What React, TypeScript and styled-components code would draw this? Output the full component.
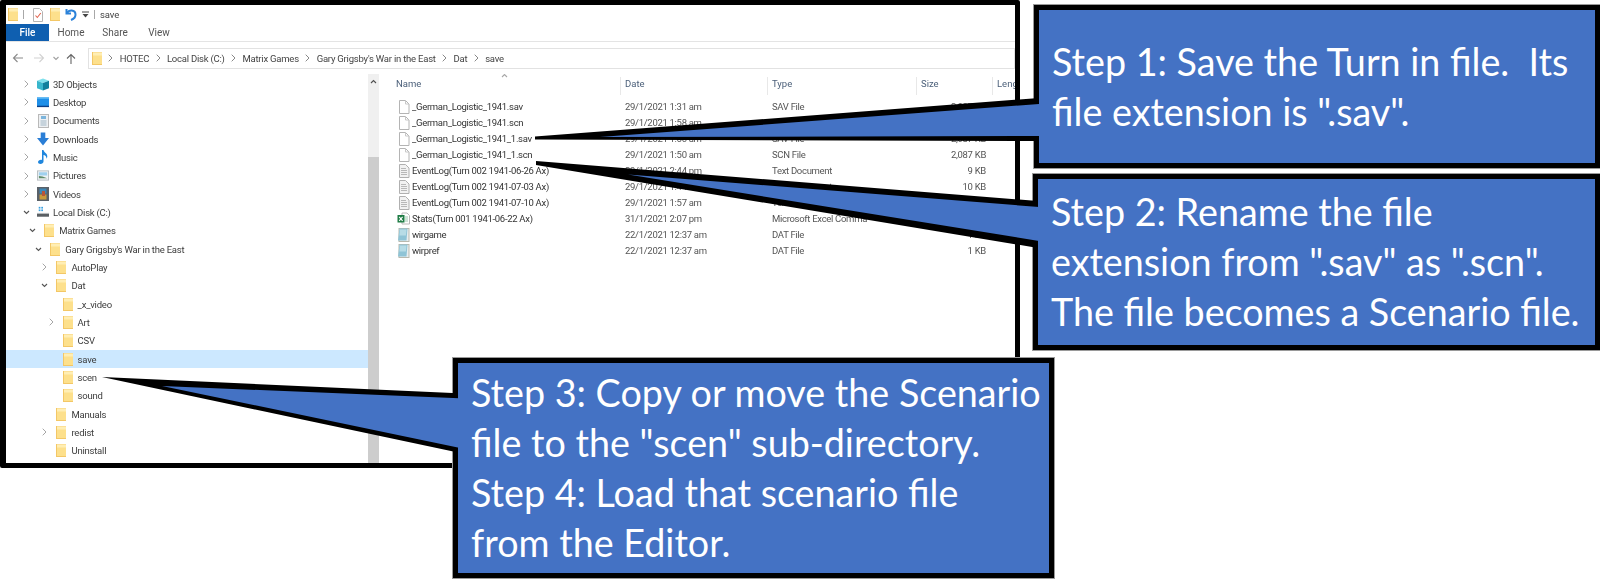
import React from "react";
import styled, { createGlobalStyle } from "styled-components";

const Global = createGlobalStyle`
  html, body { margin: 0; padding: 0; background: #fff; }
  body { font-family: Roboto, "Open Sans", sans-serif; }
`;

const Page = styled.div`
  position: relative;
  width: 1600px;
  height: 579px;
  overflow: hidden;
  background: #fff;
`;

const Frame = styled.div`
  width: 1020px;
  height: 468px;
  box-sizing: border-box;
  border: solid #000;
  border-width: 5px 5px 5px 6px;
  border-radius: 2px;
  overflow: hidden;
  background: #fff;
`;

const Window = styled.div`
  display: flex;
  flex-direction: column;
  height: 100%;
  filter: blur(0.45px);
  font-size: 10px;
  color: #3a3a3a;
`;

const TitleBar = styled.div`
  display: flex;
  align-items: center;
  height: 19px;
  padding-left: 2px;
  flex: none;
`;

const TitleText = styled.span`
  font-size: 9.5px;
  letter-spacing: -0.1px;
  color: #444;
`;

const TitleSep = styled.span`
  width: 1px;
  height: 9px;
  background: #a8a8a8;
  margin: 0 ${(p: { $gap: number }) => p.$gap}px;
`;

const Tabs = styled.div`
  display: flex;
  height: 18px;
  flex: none;
  box-sizing: border-box;
  border-bottom: 1px solid #e4e4e4;
`;

const FileTab = styled.div`
  width: 43px;
  display: flex;
  align-items: center;
  justify-content: center;
  background: #0f5fb0;
  color: #fff;
  font-weight: 500;
  font-size: 10px;
`;

const Tab = styled.div`
  width: 44px;
  display: flex;
  align-items: center;
  justify-content: center;
  color: #555;
  font-size: 10px;
`;

const AddressRow = styled.div`
  display: flex;
  align-items: center;
  height: 32px;
  flex: none;
`;

const NavButton = styled.div<{ $w: number }>`
  display: flex;
  justify-content: center;
  align-items: center;
  width: ${(p) => p.$w}px;
`;

const AddressBox = styled.div`
  display: flex;
  align-items: center;
  gap: 6.4px;
  flex: 1;
  height: 21px;
  box-sizing: border-box;
  border: 1px solid #e2e2e2;
  padding-left: 3px;
  font-size: 9.5px;
  letter-spacing: -0.22px;
  color: #444;
  white-space: nowrap;
`;

const Panes = styled.div`
  display: flex;
  flex: 1;
  min-height: 0;
`;

const Tree = styled.div`
  width: 362px;
  flex: none;
  overflow: hidden;
  padding-top: 1px;
`;

const TreeRow = styled.div<{ $level: number; $selected?: boolean }>`
  display: flex;
  align-items: center;
  height: 18.33px;
  box-sizing: border-box;
  padding-left: ${(p) => 15 + p.$level * 6.15}px;
  background: ${(p) => (p.$selected ? "#cce8ff" : "transparent")};
  font-size: 9.5px;
  letter-spacing: -0.22px;
  color: #3c3c3c;
  white-space: nowrap;
`;

const Chevron = styled.span`
  width: 11px;
  height: 12px;
  display: flex;
  align-items: center;
  justify-content: center;
  flex: none;
`;

const TreeIcon = styled.span`
  width: 12px;
  height: 14px;
  margin: 0 4px 0 5px;
  display: flex;
  align-items: center;
  justify-content: center;
  flex: none;
`;

const Scrollbar = styled.div`
  width: 11px;
  flex: none;
  display: flex;
  flex-direction: column;
  background: #f0f0f0;
`;

const ScrollUp = styled.div`
  height: 14px;
  display: flex;
  align-items: center;
  justify-content: center;
  margin-bottom: 69px;
`;

const ScrollThumb = styled.div`
  flex: 1;
  background: #cdcdcd;
`;

const Files = styled.div`
  flex: 1;
  min-width: 0;
  overflow: hidden;
`;

const HeaderRow = styled.div`
  position: relative;
  display: grid;
  grid-template-columns: 241px 147px 149px 76px 23px;
  height: 24.5px;
  padding-top: 3px;
  box-sizing: border-box;
`;

const HeaderCell = styled.div<{ $first?: boolean }>`
  height: 18px;
  line-height: 14px;
  box-sizing: border-box;
  padding-left: ${(p) => (p.$first ? 17 : 4)}px;
  border-left: ${(p) => (p.$first ? "none" : "1px solid #e8e8e8")};
  color: #4c607a;
  font-size: 9.5px;
  white-space: nowrap;
`;

const SortCaret = styled.span`
  position: absolute;
  left: 122px;
  top: -1px;
  display: flex;
`;

const FileRow = styled.div`
  display: grid;
  grid-template-columns: 241px 147px 149px 76px;
  align-items: center;
  height: 16.05px;
  font-size: 9.5px;
  letter-spacing: -0.3px;
  color: #555;
  white-space: nowrap;
`;

const NameCell = styled.div`
  display: flex;
  align-items: center;
  padding-left: 18px;
  color: #333;
`;

const FileIconBox = styled.span`
  width: 13px;
  height: 14px;
  margin-right: 2px;
  display: flex;
  align-items: center;
  justify-content: center;
  flex: none;
`;

const DataCell = styled.div`
  padding-left: 5px;
`;

const SizeCell = styled.div`
  padding-right: 6px;
  text-align: right;
`;

const Callout = styled.div<{ $l: number; $t: number; $w: number; $h: number }>`
  position: absolute;
  left: ${(p) => p.$l}px;
  top: ${(p) => p.$t}px;
  width: ${(p) => p.$w}px;
  height: ${(p) => p.$h}px;
  box-sizing: border-box;
  display: flex;
  align-items: center;
  background: #4472c4;
  border: 5px solid #000;
  outline: 1px solid #9a9a9a;
  padding-left: 13px;
  color: #fff;
  font-family: Lato, "Open Sans", sans-serif;
  line-height: 50px;
  white-space: pre;
`;

const CalloutText = styled.div`
  font-size: 37.7px;
`;

const Pointers = styled.svg`
  position: absolute;
  left: 0;
  top: 0;
  width: 1600px;
  height: 579px;
  pointer-events: none;
`;

/* ---------- icons ---------- */
const Folder = ({ w = 10, h = 13 }: { w?: number; h?: number }) => (
  <svg width={w} height={h} viewBox="0 0 10 13">
    <rect x="0" y="0" width="10" height="13" fill="#f3c766" />
    <rect x="1" y="0.500" width="9" height="11.500" fill="#fde08c" />
    <rect x="1" y="0.500" width="9" height="3" fill="#ffeeb4" />
  </svg>
);

const BlankFile = () => (
  <svg width="12" height="14" viewBox="0 0 12 14">
    <path d="M1.500.500h6l3.500 3.500v9.500h-9.500z" fill="#fff" stroke="#b4b4b4" />
    <path d="M7.500.500v3.500h3.500" fill="none" stroke="#c8c8c8" />
  </svg>
);

const TextFile = () => (
  <svg width="12" height="14" viewBox="0 0 12 14">
    <path d="M1.500.500h6l3.500 3.500v9.500h-9.500z" fill="#f2f2f2" stroke="#b0b0b0" />
    <path d="M3 4.500h5M3 6.500h6M3 8.500h6M3 10.500h6" stroke="#b8b8b8" strokeWidth="1" />
  </svg>
);

const ExcelFile = () => (
  <svg width="13" height="13" viewBox="0 0 13 13">
    <path d="M5 1h5l2.500 2.500v8.500h-7.500z" fill="#fff" stroke="#b8b8b8" />
    <path d="M8 5h3M8 7h3M8 9h3" stroke="#9cc7ae" />
    <rect x="0.500" y="3" width="7" height="7.500" fill="#1e7c45" />
    <path d="M2.200 4.800l3.400 4M5.600 4.800l-3.400 4" stroke="#fff" strokeWidth="1.100" />
  </svg>
);

const DatFile = () => (
  <svg width="13" height="14" viewBox="0 0 13 14">
    <rect x="2" y="0.500" width="10" height="13" fill="#e8eef0" stroke="#b9b9ae" />
    <path d="M1 12.500l1.500-12h8l-1 12z" fill="#8fc4d6" />
    <path d="M3 1.500h6.500l-.6 6h-6.500z" fill="#b7dce6" />
  </svg>
);

const Cube = () => (
  <svg width="13" height="13" viewBox="0 0 13 13">
    <path d="M0 2.500L6.500 0 13 2.500 6.500 5z" fill="#7fe0ec" />
    <path d="M0 2.500L6.500 5v8L0 10.500z" fill="#38b6cc" />
    <path d="M13 2.500L6.500 5v8l6.500-2.500z" fill="#0f7f9c" />
  </svg>
);

const Desktop = () => (
  <svg width="13" height="11" viewBox="0 0 13 11">
    <rect width="13" height="10" y="0" fill="#1e8fe8" />
    <rect width="13" height="1.500" y="9" fill="#0c3f86" />
    <rect width="13" height="1.500" y="0" fill="#5cb8f5" />
  </svg>
);

const Documents = () => (
  <svg width="11" height="14" viewBox="0 0 11 14">
    <rect x="0.500" y="0.500" width="10" height="13" fill="#eef0f2" stroke="#b9b9b9" />
    <rect x="3" y="2" width="5" height="3" fill="#7cb5dc" />
    <path d="M2.500 7h6M2.500 9h6M2.500 11h6" stroke="#9fb6c6" />
  </svg>
);

const Downloads = () => (
  <svg width="13" height="14" viewBox="0 0 13 14">
    <path d="M4 0h5v6h4l-6.500 8L0 6h4z" fill="#2a7ed6" />
  </svg>
);

const Music = () => (
  <svg width="10" height="14" viewBox="0 0 10 14">
    <path d="M4 0h1.500c.2 2.500 3.800 3 3.800 6.500 0 1-.4 1.800-.8 2.300.2-2.300-1.500-3.600-3-3.800V11.500c0 1.500-1.500 2.500-3 2.500C1 14 0 13.200 0 12c0-1.300 1.500-2.300 3-2.300.4 0 .7 0 1 .2z" fill="#1f86dd" />
  </svg>
);

const Pictures = () => (
  <svg width="13" height="11" viewBox="0 0 13 11">
    <rect x="0.500" y="0.500" width="12" height="10" fill="#eef2f4" stroke="#b6bcc0" />
    <rect x="2" y="2" width="9" height="3.500" fill="#9fd0ee" />
    <path d="M2 8.500V6l4 .5 5 2z" fill="#5f8c6a" />
  </svg>
);

const Videos = () => (
  <svg width="12" height="14" viewBox="0 0 12 14">
    <rect width="12" height="14" fill="#5a6168" />
    <rect x="2.500" y="1.500" width="7" height="5" fill="#3d88b8" />
    <rect x="2.500" y="7.500" width="7" height="5" fill="#c89a3c" />
    <rect x="5" y="4" width="3" height="5" fill="#b8553a" />
  </svg>
);

const LocalDisk = () => (
  <svg width="14" height="12" viewBox="0 0 14 12">
    <rect x="2" y="0" width="2" height="2" fill="#39a0e0" />
    <rect x="5" y="0" width="2" height="2" fill="#39a0e0" />
    <rect x="2" y="3" width="2" height="2" fill="#39a0e0" />
    <rect x="5" y="3" width="2" height="2" fill="#39a0e0" />
    <path d="M0 7h14v1H0z" fill="#cfd3d6" />
    <rect x="0" y="8" width="14" height="3.500" fill="#5a5f63" />
  </svg>
);

const DocCheck = () => (
  <svg width="10" height="14" viewBox="0 0 10 14">
    <path d="M.500.500h6L9.500 3.500v10h-9z" fill="#fff" stroke="#b4b4b4" />
    <path d="M2.500 7.500l1.800 2L7.800 5" fill="none" stroke="#e2644f" strokeWidth="1.100" />
  </svg>
);

const Undo = () => (
  <svg width="12" height="13" viewBox="0 0 12 13">
    <path d="M1.500 1v4.500H6" fill="none" stroke="#2b82d9" strokeWidth="2" />
    <path d="M2 5c2-3.500 8-3.500 8.500 1 .3 3-2 5-4.500 6" fill="none" stroke="#2b82d9" strokeWidth="2" />
  </svg>
);

const DropMini = () => (
  <svg width="7" height="7" viewBox="0 0 7 7">
    <path d="M0 1h7" stroke="#444" />
    <path d="M.5 3h6L3.500 6.500z" fill="#444" />
  </svg>
);

const ArrowLeft = ({ color }: { color: string }) => (
  <svg width="11" height="10" viewBox="0 0 11 10">
    <path d="M11 5H1.500M5.500 1l-4 4 4 4" fill="none" stroke={color} strokeWidth="1.100" />
  </svg>
);

const ArrowRight = ({ color }: { color: string }) => (
  <svg width="11" height="10" viewBox="0 0 11 10">
    <path d="M0 5h9.500M5.500 1l4 4-4 4" fill="none" stroke={color} strokeWidth="1.100" />
  </svg>
);

const ArrowUp = () => (
  <svg width="10" height="11" viewBox="0 0 10 11">
    <path d="M5 11V1.500M1 5.500l4-4 4 4" fill="none" stroke="#666" strokeWidth="1.100" />
  </svg>
);

const ChevDownSmall = ({ color = "#888", w = 6 }: { color?: string; w?: number }) => (
  <svg width={w} height="5" viewBox="0 0 6 5">
    <path d="M.500 1l2.500 2.500L5.500 1" fill="none" stroke={color} strokeWidth="1.100" />
  </svg>
);

const ChevRight = ({ color = "#a6a6a6" }: { color?: string }) => (
  <svg width="5" height="8" viewBox="0 0 5 8">
    <path d="M.700.700L4 4 .7 7.300" fill="none" stroke={color} strokeWidth="1" />
  </svg>
);

const ChevUp = ({ color, w }: { color: string; w: number }) => (
  <svg width={w} height="5" viewBox="0 0 6 5">
    <path d="M.500 4L3 1.500 5.500 4" fill="none" stroke={color} strokeWidth="1.100" />
  </svg>
);

/* ---------- data ---------- */
type TreeItem = {
  label: string;
  level: number;
  chev?: "open" | "closed";
  icon?: React.ReactNode;
  selected?: boolean;
};

const tree: TreeItem[] = [
  { label: "3D Objects", level: 0, chev: "closed", icon: <Cube /> },
  { label: "Desktop", level: 0, chev: "closed", icon: <Desktop /> },
  { label: "Documents", level: 0, chev: "closed", icon: <Documents /> },
  { label: "Downloads", level: 0, chev: "closed", icon: <Downloads /> },
  { label: "Music", level: 0, chev: "closed", icon: <Music /> },
  { label: "Pictures", level: 0, chev: "closed", icon: <Pictures /> },
  { label: "Videos", level: 0, chev: "closed", icon: <Videos /> },
  { label: "Local Disk (C:)", level: 0, chev: "open", icon: <LocalDisk /> },
  { label: "Matrix Games", level: 1, chev: "open" },
  { label: "Gary Grigsby's War in the East", level: 2, chev: "open" },
  { label: "AutoPlay", level: 3, chev: "closed" },
  { label: "Dat", level: 3, chev: "open" },
  { label: "_x_video", level: 4 },
  { label: "Art", level: 4, chev: "closed" },
  { label: "CSV", level: 4 },
  { label: "save", level: 4, selected: true },
  { label: "scen", level: 4 },
  { label: "sound", level: 4 },
  { label: "Manuals", level: 3 },
  { label: "redist", level: 3, chev: "closed" },
  { label: "Uninstall", level: 3 },
];

type FileItem = { icon: React.ReactNode; name: string; date: string; type: string; size: string };

const files: FileItem[] = [
  { icon: <BlankFile />, name: "_German_Logistic_1941.sav", date: "29/1/2021 1:31 am", type: "SAV File", size: "2,087 KB" },
  { icon: <BlankFile />, name: "_German_Logistic_1941.scn", date: "29/1/2021 1:58 am", type: "SCN File", size: "2,087 KB" },
  { icon: <BlankFile />, name: "_German_Logistic_1941_1.sav", date: "29/1/2021 1:50 am", type: "SAV File", size: "2,087 KB" },
  { icon: <BlankFile />, name: "_German_Logistic_1941_1.scn", date: "29/1/2021 1:50 am", type: "SCN File", size: "2,087 KB" },
  { icon: <TextFile />, name: "EventLog(Turn 002 1941-06-26 Ax)", date: "29/1/2021 2:44 pm", type: "Text Document", size: "9 KB" },
  { icon: <TextFile />, name: "EventLog(Turn 002 1941-07-03 Ax)", date: "29/1/2021 1:44 am", type: "Text Document", size: "10 KB" },
  { icon: <TextFile />, name: "EventLog(Turn 002 1941-07-10 Ax)", date: "29/1/2021 1:57 am", type: "Text Document", size: "10 KB" },
  { icon: <ExcelFile />, name: "Stats(Turn 001 1941-06-22 Ax)", date: "31/1/2021 2:07 pm", type: "Microsoft Excel Comma", size: "2 KB" },
  { icon: <DatFile />, name: "wirgame", date: "22/1/2021 12:37 am", type: "DAT File", size: "1 KB" },
  { icon: <DatFile />, name: "wirpref", date: "22/1/2021 12:37 am", type: "DAT File", size: "1 KB" },
];

const crumbs = ["HOTEC", "Local Disk (C:)", "Matrix Games", "Gary Grigsby's War in the East", "Dat", "save"];

export default function App() {
  return (
    <Page>
      <Global />
      <Frame>
        <Window>
          <TitleBar>
            <Folder />
            <TitleSep $gap={5} />
            <span style={{ width: 4 }} />
            <DocCheck />
            <span style={{ width: 7 }} />
            <Folder />
            <span style={{ width: 5 }} />
            <Undo />
            <span style={{ width: 5 }} />
            <DropMini />
            <TitleSep $gap={5} />
            <TitleText>save</TitleText>
          </TitleBar>
          <Tabs>
            <FileTab>File</FileTab>
            <Tab>Home</Tab>
            <Tab>Share</Tab>
            <Tab>View</Tab>
          </Tabs>
          <AddressRow>
            <NavButton $w={22}>
              <ArrowLeft color="#8a8a8a" />
            </NavButton>
            <NavButton $w={22}>
              <ArrowRight color="#d2d2d2" />
            </NavButton>
            <NavButton $w={12}>
              <ChevDownSmall color="#a0a0a0" />
            </NavButton>
            <NavButton $w={18}>
              <ArrowUp />
            </NavButton>
            <span style={{ width: 8 }} />
            <AddressBox>
              <Folder />
              {crumbs.map((c) => (
                <React.Fragment key={c}>
                  <ChevRight color="#888" />
                  <span>{c}</span>
                </React.Fragment>
              ))}
            </AddressBox>
          </AddressRow>
          <Panes>
            <Tree>
              {tree.map((t) => (
                <TreeRow key={t.label} $level={t.level} $selected={t.selected}>
                  <Chevron>
                    {t.chev === "closed" && <ChevRight />}
                    {t.chev === "open" && <ChevDownSmall color="#555" w={7} />}
                  </Chevron>
                  <TreeIcon>{t.icon ?? <Folder />}</TreeIcon>
                  {t.label}
                </TreeRow>
              ))}
            </Tree>
            <Scrollbar>
              <ScrollUp>
                <ChevUp color="#505050" w={7} />
              </ScrollUp>
              <ScrollThumb />
            </Scrollbar>
            <Files>
              <HeaderRow>
                <SortCaret>
                  <ChevUp color="#a8a8a8" w={7} />
                </SortCaret>
                <HeaderCell $first>Name</HeaderCell>
                <HeaderCell>Date</HeaderCell>
                <HeaderCell>Type</HeaderCell>
                <HeaderCell>Size</HeaderCell>
                <HeaderCell>Leng</HeaderCell>
              </HeaderRow>
              {files.map((f) => (
                <FileRow key={f.name}>
                  <NameCell>
                    <FileIconBox>{f.icon}</FileIconBox>
                    {f.name}
                  </NameCell>
                  <DataCell>{f.date}</DataCell>
                  <DataCell>{f.type}</DataCell>
                  <SizeCell>{f.size}</SizeCell>
                </FileRow>
              ))}
            </Files>
          </Panes>
        </Window>
      </Frame>

      <Callout $l={1034} $t={5} $w={566} $h={163}>
        <CalloutText>{'Step 1: Save the Turn in file.  Its\nfile extension is ".sav".'}</CalloutText>
      </Callout>
      <Callout $l={1033} $t={174} $w={567} $h={176}>
        <CalloutText>{'Step 2: Rename the file\nextension from ".sav" as ".scn".\nThe file becomes a Scenario file.'}</CalloutText>
      </Callout>
      <Callout $l={453} $t={358} $w={601} $h={220}>
        <CalloutText>{'Step 3: Copy or move the Scenario\nfile to the "scen" sub-directory.\nStep 4: Load that scenario file\nfrom the Editor.'}</CalloutText>
      </Callout>

      <Pointers viewBox="0 0 1600 579">
        <polygon points="535,136.500 1039,98 1039,141 535,139.500" fill="#000" />
        <polygon points="600,137 1039,104 1039,136" fill="#4472c4" />
        <polygon points="536,161 1038,201 1038,248 536,165" fill="#000" />
        <polygon points="628,174.500 1039,207 1039,241" fill="#4472c4" />
        <polygon points="102,377 458,393.300 458,452.600" fill="#000" />
        <polygon points="162,386 459,398.300 459,447.700" fill="#4472c4" />
      </Pointers>
    </Page>
  );
}
